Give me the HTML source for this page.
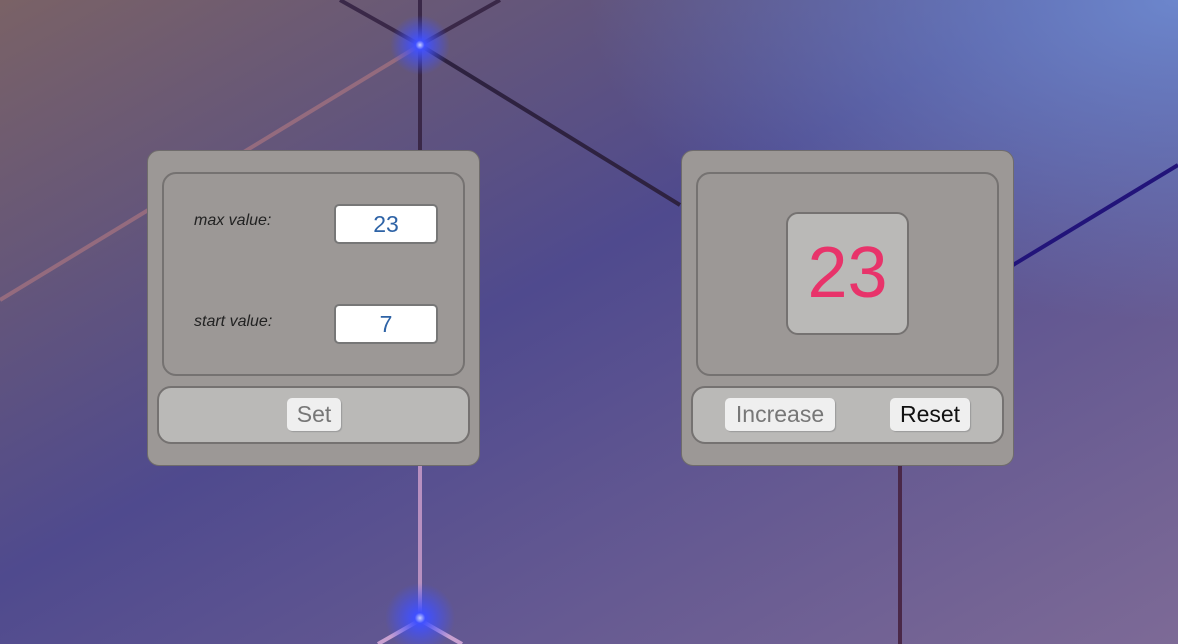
<!DOCTYPE html>
<html><head><style>
*{box-sizing:border-box}
body{margin:0;width:1178px;height:644px;overflow:hidden;position:relative;font-family:"Liberation Sans",sans-serif}
.bg{position:absolute;inset:0}
.panel{position:absolute;top:150px;width:333px;height:316px;background:#9c9896;border:1px solid #6f6c6b;border-radius:12px}
.inner{position:absolute;left:14px;top:21px;width:303px;height:204px;border:2px solid #757271;border-radius:14px;background:#9c9896}
.bar{position:absolute;left:9px;top:235px;width:313px;height:58px;border:2px solid #757271;border-radius:14px;background:#bab9b7}
.lbl{position:absolute;left:30px;font-style:italic;font-size:16px;color:#222}
.inp{position:absolute;left:170px;width:104px;height:40px;background:#fff;border:2px solid #777;border-radius:5px;color:#2e63a6;font-size:23px;text-align:center;line-height:36px}
.btn{position:absolute;top:10px;height:33px;background:#efefef;border-radius:5px;font-size:23px;line-height:33px;text-align:center;box-shadow:1px 1px 1px #999}
</style></head><body>
<svg class="bg" width="1178" height="644">
<defs>
<linearGradient id="g" x1="0" y1="0" x2="1" y2="1">
<stop offset="0" stop-color="#7a6266"/><stop offset="0.45" stop-color="#4f4a8e"/><stop offset="1" stop-color="#7d6a96"/></linearGradient>
<radialGradient id="tr" cx="1" cy="0" r="0.5"><stop offset="0" stop-color="#6c86cc"/><stop offset="1" stop-color="#6c86cc" stop-opacity="0"/></radialGradient>
<radialGradient id="gl"><stop offset="0" stop-color="#c8d0ff"/><stop offset="0.15" stop-color="#4050ff"/><stop offset="1" stop-color="#4050ff" stop-opacity="0"/></radialGradient>
</defs>
<rect width="1178" height="644" fill="url(#g)"/>
<rect width="1178" height="644" fill="url(#tr)"/>
<g stroke-width="4" fill="none">
<line x1="420" y1="0" x2="420" y2="150" stroke="#3a2848"/>
<line x1="420" y1="45" x2="340" y2="0" stroke="#3a2848"/>
<line x1="420" y1="45" x2="500" y2="0" stroke="#3a2848"/>
<line x1="420" y1="45" x2="680" y2="205" stroke="#2e2240"/>
<line x1="420" y1="45" x2="0" y2="300" stroke="#a07080" stroke-opacity="0.8"/>
<line x1="1013" y1="265" x2="1178" y2="165" stroke="#22147a"/>
<line x1="420" y1="465" x2="420" y2="620" stroke="#b890c0"/>
<line x1="420" y1="620" x2="378" y2="644" stroke="#c8a0d0"/>
<line x1="420" y1="620" x2="462" y2="644" stroke="#c8a0d0"/>
<line x1="900" y1="465" x2="900" y2="644" stroke="#4a2848"/>
</g>
<circle cx="420" cy="45" r="30" fill="url(#gl)"/>
<circle cx="420" cy="618" r="35" fill="url(#gl)"/>
</svg>
<div class="panel" style="left:147px">
<div class="inner">
<div class="lbl" style="top:38px">max value:</div>
<div class="inp" style="top:30px">23</div>
<div class="lbl" style="top:139px">start value:</div>
<div class="inp" style="top:130px">7</div>
</div>
<div class="bar"><div class="btn" style="left:128px;width:54px;color:#777">Set</div></div>
</div>
<div class="panel" style="left:681px">
<div class="inner">
<div style="position:absolute;left:88px;top:38px;width:123px;height:123px;border:2px solid #757271;border-radius:12px;background:#bab9b7;color:#e8336a;font-family:'Liberation Sans',sans-serif;font-size:72px;line-height:119px;text-align:center">23</div>
</div>
<div class="bar"><div class="btn" style="left:32px;width:110px;color:#777">Increase</div><div class="btn" style="left:197px;width:80px;color:#111">Reset</div></div>
</div>
</body></html>
